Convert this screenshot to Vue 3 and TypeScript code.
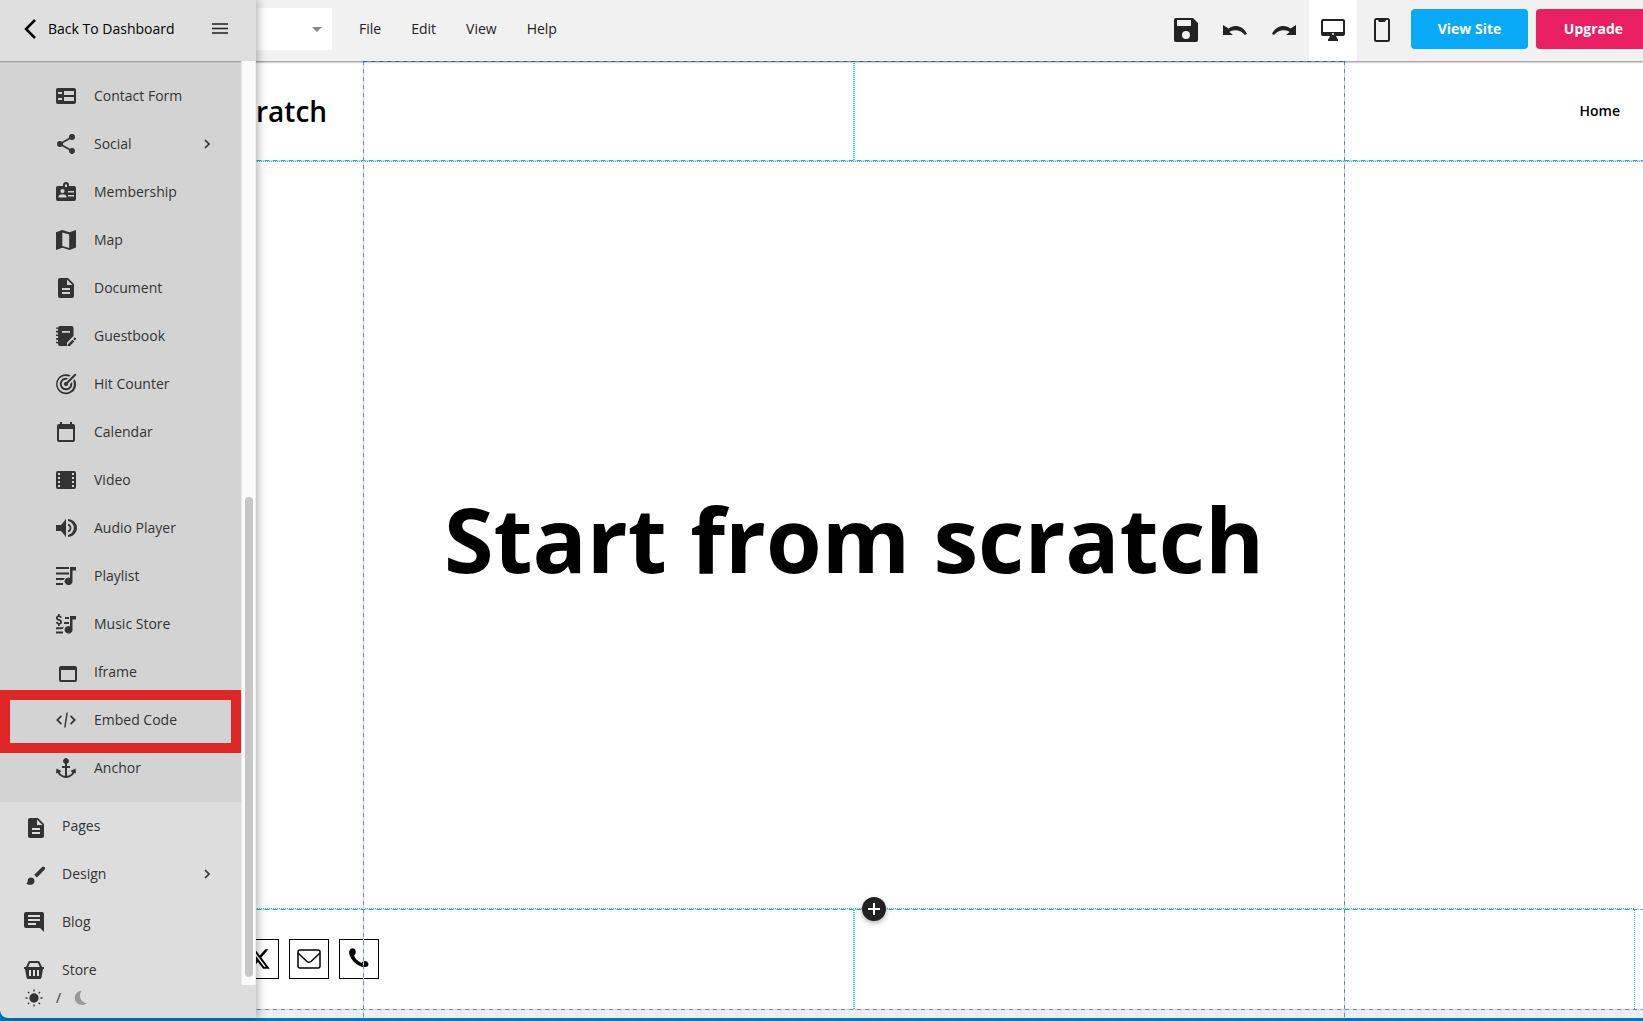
<script setup lang="ts">
interface MenuItem {
  label: string
  icon: string
  arrow?: boolean
  marked?: boolean
}

const icons: Record<string, string> = {
  form: 'M4 4h16a2 2 0 0 1 2 2v12a2 2 0 0 1-2 2H4a2 2 0 0 1-2-2V6a2 2 0 0 1 2-2ZM4 8v2h4V8ZM4 14v2h4v-2ZM10 7v4h10V7ZM10 13v4h10v-4Z',
  share: 'M18,16.08C17.24,16.08 16.56,16.38 16.04,16.85L8.91,12.7C8.96,12.47 9,12.24 9,12C9,11.76 8.96,11.53 8.91,11.3L15.96,7.19C16.5,7.69 17.21,8 18,8A3,3 0 0,0 21,5A3,3 0 0,0 18,2A3,3 0 0,0 15,5C15,5.24 15.04,5.47 15.09,5.7L8.04,9.81C7.5,9.31 6.79,9 6,9A3,3 0 0,0 3,12A3,3 0 0,0 6,15C6.79,15 7.5,14.69 8.04,14.19L15.16,18.34C15.11,18.55 15.08,18.77 15.08,19C15.08,20.61 16.39,21.91 18,21.91C19.61,21.91 20.92,20.61 20.92,19A2.92,2.92 0 0,0 18,16.08Z',
  badge: 'M4 6h5V5a3 3 0 0 1 6 0v1h5a2 2 0 0 1 2 2v11a2 2 0 0 1-2 2H4a2 2 0 0 1-2-2V8a2 2 0 0 1 2-2ZM11 4.500v2.500h2V4.500ZM8.500 9a2 2 0 1 0 0 4.200a2 2 0 0 0 0-4.200ZM4.500 17.500h8v-1c0-1.300-2.600-2.200-4-2.200s-4 .9-4 2.200ZM14 11v1.500h6V11ZM14 15v1.500h6V15Z',
  map: 'M2 4.200 8.300 2l7.200 2.300L22 2v17.500L15.700 22l-7.200-2.300L2 22ZM8.300 4.600v13.300l6.900 2V6.500Z',
  doc: 'M14 2H6c-1.100 0-2 .9-2 2v16c0 1.100.9 2 2 2h12c1.100 0 2-.9 2-2V8l-6-6zm2 16H8v-2h8v2zm0-4H8v-2h8v2zm-3-5V3.500L18.500 9H13z',
  book: 'M6 2h11.500a2 2 0 0 1 2 2v8L13 18.500V22H6a2 2 0 0 1-2-2v-.7H2v-1.600h2v-2H2V14h2v-2H2v-1.600h2v-2H2V6.700h2v-2H2V3.500h2.100A2 2 0 0 1 6 2ZM8 7v1.800h8V7ZM13.800 20.500l4.700-4.700 1.800 1.800-4.400 4.400h-2.100ZM19.200 14.900l1.600-1.600 1.500 1.500-1.500 1.600Z',
  target: 'M20.800 7.300l-1.600 1.600a8.200 8.200 0 1 1-4.100-4.100l1.500-1.500A10 10 0 1 0 20.800 7.300ZM18 10l-1.700 1.700A4.300 4.300 0 1 1 12.300 7.700L14 6A6.300 6.300 0 1 0 18 10ZM21 1.600l-8.500 8.500a2 2 0 1 0 1.400 1.400L22.400 3Z',
  calendar: 'M19 20H5V9H19M16 2V4H8V2H6V4H5C3.890 4 3 4.890 3 6V20A2 2 0 0 0 5 22H19A2 2 0 0 0 21 20V6C21 4.890 20.100 4 19 4H18V2',
  film: 'M4 3h16a2 2 0 0 1 2 2v14a2 2 0 0 1-2 2H4a2 2 0 0 1-2-2V5a2 2 0 0 1 2-2ZM4 5v2h2V5ZM4 9v2h2V9ZM4 13v2h2v-2ZM4 17v2h2v-2ZM18 5v2h2V5ZM18 9v2h2V9ZM18 13v2h2v-2ZM18 17v2h2v-2Z',
  audio: 'M2 9v6h5l5 6V3L7 9ZM14 3v2.100a7 7 0 0 1 0 13.800V21a9 9 0 0 0 0-18ZM14 7.500v2a2.700 2.700 0 0 1 0 5v2a4.700 4.700 0 0 0 0-9Z',
  playlist: 'M2 3h13v2H2ZM2 8.500h13v2H2ZM2 14h9l-1.500 2H2ZM2 19h7v2H2ZM16 3h6v3.500h-3.500V17.500a4 3.700 0 1 1-2.500-3.600Z',
  store: 'M11 5h4v2h-4ZM10 10h5v2h-5ZM2 19.500h7v2H2ZM2 15.500c2-.5 5 .5 8-1l-1 2c-2 1.200-5 .6-7 .8ZM16 4h6v3.500h-3.500V18a4 3.700 0 1 1-2.500-3.600ZM4 2h1.700v1.500c1.300.3 2 1 2.200 2.200H6C5.800 5.100 5.400 4.900 4.800 4.900 3.200 4.900 3.300 6.500 4.800 6.900 7 7.400 8 8.300 8 9.900c0 1.400-.9 2.200-2.300 2.500V14H4v-1.600C2.700 12 2 11.200 1.900 10h1.800c.5 1.500 2.700 1 2.500-.1C6 8.300 2 8.900 2 5.900 2 4.700 2.800 3.800 4 3.500Z',
  frame: 'M7 6h14a2 2 0 0 1 2 2v12a2 2 0 0 1-2 2H7a2 2 0 0 1-2-2V8a2 2 0 0 1 2-2ZM7 10v10h14V10Z',
  code: 'M6.900 7.300 8 8.500 4.600 12 8 15.500 6.900 16.700 2 12ZM17.100 7.300 16 8.500l3.400 3.500L16 15.500l1.100 1.200L22 12ZM12.500 4.500h1.400l-2.400 15h-1.400Z',
  anchor: 'M12 2a3 3 0 0 1 1 5.800V10h3v2h-3v7.800c2.500-.3 4.500-1.500 5.300-3.300L16.500 15l5-2.500.5 5-1.500-.7C19 20 16 21.500 12 22c-4-.5-7-2-8.500-5.200L2 17.500l.5-5 5 2.500-1.800 1.500c.8 1.800 2.800 3 5.300 3.300V12H8v-2h3V7.800A3 3 0 0 1 12 2Z',
  page: 'M16 4H8c-1.100 0-2 .9-2 2v16c0 1.100.9 2 2 2h12c1.100 0 2-.9 2-2V10l-6-6zm2 16h-8v-2h8v2zm0-4h-8v-2h8v2zm-3-5V5.500L20.500 11H15z',
  brush: 'M9 15.500c2 0 3.500 1.500 3.500 3.400 0 2.500-2 3.900-4.500 3.900-1.500 0-2.900-.6-3.800-1.600 1.100-.2 1.500-1 1.500-2.400 0-1.900 1.400-3.300 3.300-3.300ZM22.700 5.300a1.500 1.500 0 0 1 0 2.200l-7.800 8-2.700-2.700 8-7.800a1.500 1.500 0 0 1 2.100 0Z',
  blog: 'M4 2h16a2 2 0 0 1 2 2v18l-4-4H4a2 2 0 0 1-2-2V4a2 2 0 0 1 2-2ZM6 5v2h12V5ZM6 9v2h12V9ZM6 13v2h8v-2Z',
  basket: 'M8 3h8a2 2 0 0 1 1.800 1.200L20 9h2v2h-1l-1.500 8.400A2 2 0 0 1 17.500 21h-11a2 2 0 0 1-2-1.600L3 11H2V9h2l2.200-4.800A2 2 0 0 1 8 3ZM8 5 6.200 9h11.600L16 5ZM7 12v6h2v-6ZM11 12v6h2v-6ZM15 12v6h2v-6Z',
  save: 'M2 0h17l5 5v17a2 2 0 0 1-2 2H2a2 2 0 0 1-2-2V2a2 2 0 0 1 2-2ZM3 2v6h14V2ZM12 13a4 4 0 1 0 0 8a4 4 0 0 0 0-8Z',
  undo: 'M12.500 8c-2.650 0-5.050.99-6.900 2.600L0 7v10h10l-3.620-2.920c1.390-1.160 3.160-1.880 5.120-1.880 4.500 0 8.500 2 10.300 4.900L24 16C21.500 10.500 17 8 12.500 8z',
  desktop: 'M2 1h20a2 2 0 0 1 2 2v13a2 2 0 0 1-2 2h-7l1.500 3H17v2H7v-2h.5L9 18H2a2 2 0 0 1-2-2V3a2 2 0 0 1 2-2ZM2 3v11h20V3ZM12 15a1 1 0 1 0 0 2a1 1 0 0 0 0-2Z',
  phone: 'M6.500 0h11A2.500 2.500 0 0 1 20 2.500v19a2.500 2.500 0 0 1-2.500 2.500h-11A2.500 2.500 0 0 1 4 21.500v-19A2.500 2.500 0 0 1 6.500 0ZM6 2v20h12V2h-2l-1 2H9L8 2Z',
}

const widgets: MenuItem[] = [
  { label: 'Contact Form', icon: 'form' },
  { label: 'Social', icon: 'share', arrow: true },
  { label: 'Membership', icon: 'badge' },
  { label: 'Map', icon: 'map' },
  { label: 'Document', icon: 'doc' },
  { label: 'Guestbook', icon: 'book' },
  { label: 'Hit Counter', icon: 'target' },
  { label: 'Calendar', icon: 'calendar' },
  { label: 'Video', icon: 'film' },
  { label: 'Audio Player', icon: 'audio' },
  { label: 'Playlist', icon: 'playlist' },
  { label: 'Music Store', icon: 'store' },
  { label: 'Iframe', icon: 'frame' },
  { label: 'Embed Code', icon: 'code', marked: true },
  { label: 'Anchor', icon: 'anchor' },
]

const sections: MenuItem[] = [
  { label: 'Pages', icon: 'page' },
  { label: 'Design', icon: 'brush', arrow: true },
  { label: 'Blog', icon: 'blog' },
  { label: 'Store', icon: 'basket' },
]

const menus: string[] = ['File', 'Edit', 'View', 'Help']
</script>

<template>
  <div class="app">
    <header class="topbar">
      <select class="page-select" aria-label="Page"></select>
      <svg class="caret" viewBox="0 0 10 5"><path d="M0 0h10L5 5Z" /></svg>
      <nav class="menus">
        <button v-for="m in menus" :key="m" class="menu">{{ m }}</button>
      </nav>
      <div class="tools">
        <button class="tool" aria-label="Save"><svg viewBox="0 0 24 24"><path :d="icons.save" /></svg></button>
        <button class="tool" aria-label="Undo"><svg viewBox="0 0 24 24"><path :d="icons.undo" /></svg></button>
        <button class="tool flip" aria-label="Redo"><svg viewBox="0 0 24 24"><path :d="icons.undo" /></svg></button>
        <button class="tool active" aria-label="Desktop"><svg viewBox="0 0 24 24"><path :d="icons.desktop" /></svg></button>
        <button class="tool" aria-label="Mobile"><svg viewBox="0 0 24 24"><path :d="icons.phone" /></svg></button>
      </div>
      <button class="cta view">View Site</button>
      <button class="cta upgrade">Upgrade</button>
    </header>

    <main class="canvas">
      <section class="site-head">
        <div class="brand">ratch</div>
        <a class="home" href="#">Home</a>
        <i class="teal-mid"></i>
      </section>
      <div class="rule"><i class="dash"></i><i class="dots"></i></div>
      <section class="hero">
        <h1>Start from scratch</h1>
      </section>
      <div class="rule foot-rule">
        <i class="dots"></i><i class="dash"></i>
        <button class="add" aria-label="Add section">
          <svg viewBox="0 0 24 24"><path d="M11 6h2v5h5v2h-5v5h-2v-5H6v-2h5Z" /></svg>
        </button>
      </div>
      <section class="site-foot">
        <a class="social" href="#" aria-label="X">
          <svg viewBox="0 0 24 24"><path d="M18.240 2.250h3.310l-7.230 8.260 8.500 11.240H16.170l-5.210-6.820L4.990 21.750H1.680l7.730-8.840L1.250 2.250H8.080l4.710 6.230Zm-1.160 17.520h1.830L7.080 4.130H5.120Z" /></svg>
        </a>
        <a class="social" href="#" aria-label="Email">
          <svg viewBox="0 0 24 24" class="line"><rect x="1" y="3" width="22" height="18" rx="2" /><path d="M1 6l9 8.500q2 1.500 4 0L23 6" /></svg>
        </a>
        <a class="social" href="#" aria-label="Phone">
          <svg viewBox="0 0 24 24"><path d="M3.500 2C5 .5 8 1 8.500 3.500 9 6 8.500 7.500 7 8.500c1 3 4 6 7.500 7.500 1-1.800 2.500-2.300 4.500-1.800 2.500.6 3 3.300 1.800 4.800-1.300 1.500-4.500 1.300-7.300.2C8 17 4 12.500 2.400 7.500 1.900 5.500 2 3.500 3.500 2Z" /></svg>
        </a>
        <i class="teal-mid"></i>
        <i class="teal-end"></i>
      </section>
      <i class="dash"></i>
      <div class="outside"></div>
      <div class="column-guide"><i class="dash"></i></div>
    </main>

    <aside class="sidebar">
      <div class="side-head">
        <a class="back" href="#">
          <svg viewBox="0 0 12 20"><path d="M11 1 2 10l9 9" /></svg>
          <span>Back To Dashboard</span>
        </a>
        <button class="burger" aria-label="Toggle menu">
          <svg viewBox="0 0 16 12"><path d="M0 1h16M0 5.500h16M0 10h16" /></svg>
        </button>
      </div>
      <div class="side-body">
        <nav class="side-nav">
          <div class="widgets">
            <a v-for="w in widgets" :key="w.label" href="#" class="item sub" :class="{ marked: w.marked }">
              <svg class="ico" viewBox="0 0 24 24"><path :d="icons[w.icon]" /></svg>
              <span>{{ w.label }}</span>
              <svg v-if="w.arrow" class="arrow" viewBox="0 0 8 12"><path d="M2 2l4 4-4 4" /></svg>
            </a>
          </div>
          <a v-for="s in sections" :key="s.label" href="#" class="item">
            <svg class="ico" viewBox="0 0 24 24"><path :d="icons[s.icon]" /></svg>
            <span>{{ s.label }}</span>
            <svg v-if="s.arrow" class="arrow" viewBox="0 0 8 12"><path d="M2 2l4 4-4 4" /></svg>
          </a>
        </nav>
        <div class="track"><div class="thumb"></div></div>
      </div>
      <div class="side-foot">
        <svg class="sun" viewBox="0 0 18 18"><circle cx="9" cy="9" r="4" /><path d="M9 .5v2M9 15.500v2M.5 9h2M15.500 9h2M3 3l1.300 1.300M13.700 13.700 15 15M3 15l1.300-1.300M13.700 4.300 15 3" /></svg>
        <span>/</span>
        <svg class="moon" viewBox="0 0 14 16"><path d="M8 .5C5 3 4.500 11 12.800 13.500 8 17 .8 14 .8 7.800.8 3.500 4 .8 8 .5Z" /></svg>
      </div>
    </aside>
    <div class="strip"></div>
  </div>
</template>

<style>
body {
  margin: 0;
  overflow: hidden;
}
</style>

<style scoped>
* {
  box-sizing: border-box;
}
.app {
  position: relative;
  display: flex;
  flex-direction: column;
  height: 100vh;
  overflow: hidden;
  background: #0079b0;
  font-family: "Open Sans", "Noto Sans", sans-serif;
  font-size: 14px;
  line-height: 20px;
  color: #222;
}
button {
  font: inherit;
  color: inherit;
  border: 0;
  padding: 0;
  background: none;
}
a {
  color: inherit;
  text-decoration: none;
}
svg {
  display: block;
  flex: none;
  fill: currentColor;
  fill-rule: evenodd;
}
.topbar {
  position: relative;
  z-index: 2;
  flex: none;
  display: flex;
  align-items: center;
  height: 61px;
  padding: 0 0 3px 65px;
  background: #f1f1f1;
  box-shadow: 0 1px 2px rgba(0, 0, 0, 0.5);
}
.page-select {
  appearance: none;
  width: 267px;
  height: 42px;
  border: 0;
  border-radius: 0;
  background: #fff;
}
.caret {
  width: 10px;
  height: 5px;
  margin-left: -20px;
  color: #888;
}
.menus {
  display: flex;
  gap: 30px;
  margin-left: 37px;
}
.tools {
  display: flex;
  gap: 1px;
  align-self: stretch;
  margin: 0 5px -3px auto;
}
.tool {
  display: flex;
  align-items: center;
  justify-content: center;
  width: 48px;
  padding-bottom: 1px;
}
.tool svg {
  width: 24px;
  height: 24px;
}
.flip svg {
  transform: scaleX(-1);
}
.tool.active {
  background: #fff;
}
.cta {
  height: 40px;
  border-radius: 4px;
  color: #fff;
  font-weight: 700;
}
.view {
  width: 117px;
  background: #08a9f7;
}
.upgrade {
  width: 107px;
  margin-left: 8px;
  padding-left: 8px;
  border-radius: 4px 0 0 4px;
  background: #ea1e63;
}
.canvas {
  position: relative;
  flex: 1;
  display: flex;
  flex-direction: column;
  margin-left: 65px;
  background: #fff;
}
.dash,
.dots {
  display: block;
  height: 1px;
}
.dash {
  background: repeating-linear-gradient(90deg, #4d8df6 0 4px, #d6d0cc 4px 8px);
}
.dots {
  background: repeating-linear-gradient(90deg, #1fd6cb 0 1px, #d9f8f5 1px 2px);
}
.site-head {
  position: relative;
  display: flex;
  align-items: center;
  justify-content: space-between;
  height: 99px;
  padding: 0 23px 0 191px;
  color: #000;
  font-weight: 600;
}
.brand {
  font-size: 28px;
  line-height: 40px;
}
.teal-mid {
  position: absolute;
  top: 0;
  bottom: 0;
  left: calc(50% - 1px);
  width: 2px;
  background: repeating-linear-gradient(#1fd6cb 0 1px, #fff 1px 2px);
}
.teal-end {
  position: absolute;
  top: 0;
  bottom: 0;
  right: 8px;
  width: 1px;
  background: repeating-linear-gradient(#1fd6cb 0 1px, #fff 1px 2px);
}
.rule {
  position: relative;
}
.foot-rule .dots {
  margin-right: 8px;
}
.hero {
  flex: 1;
  display: flex;
  align-items: center;
  justify-content: center;
  padding-top: 6px;
}
h1 {
  margin: 0;
  color: #000;
  font-size: 90px;
  line-height: 120px;
  font-weight: 700;
  white-space: nowrap;
}
.add {
  position: absolute;
  top: -11px;
  left: calc(50% + 8px);
  width: 24px;
  height: 24px;
  border-radius: 50%;
  background: #222;
  color: #fff;
  box-shadow: 0 2px 5px rgba(0, 0, 0, 0.3);
}
.site-foot {
  position: relative;
  display: flex;
  align-items: center;
  gap: 10px;
  height: 99px;
  padding: 0 0 2px 174px;
  color: #000;
}
.social {
  display: flex;
  align-items: center;
  justify-content: center;
  width: 40px;
  height: 40px;
  border: 1px solid #000;
}
.social svg {
  width: 24px;
  height: 24px;
}
.social .line {
  fill: none;
  stroke: currentColor;
  stroke-width: 1.5;
}
.outside {
  height: 8px;
  background: repeating-linear-gradient(90deg, #f0f0f0 0 10px, #ededee 10px 20px);
}
.column-guide {
  position: absolute;
  top: 0;
  bottom: 0;
  left: 50%;
  width: 982px;
  transform: translateX(-50%);
  pointer-events: none;
}
.column-guide::before,
.column-guide::after {
  content: "";
  position: absolute;
  top: 0;
  bottom: 0;
  left: 0;
  width: 1px;
  background: repeating-linear-gradient(#4d8df6 0 4px, #d6d0cc 4px 8px);
}
.column-guide::after {
  left: auto;
  right: 0;
}
.sidebar {
  position: absolute;
  z-index: 3;
  top: 0;
  bottom: 3px;
  left: 0;
  width: 256px;
  display: flex;
  flex-direction: column;
  background: #ddd;
  border-radius: 2px 0 0 8px;
  box-shadow: 2px 0 10px rgba(0, 0, 0, 0.3);
  color: #333;
}
.side-head {
  flex: none;
  display: flex;
  align-items: center;
  justify-content: space-between;
  height: 61px;
  padding: 0 28px 3px 24px;
  border-radius: 2px 0 0 0;
  background: #dfdfdf;
  color: #000;
}
.back {
  display: flex;
  align-items: center;
  gap: 12px;
}
.back svg {
  width: 12px;
  height: 20px;
  fill: none;
  stroke: currentColor;
  stroke-width: 2.5;
}
.burger svg {
  width: 16px;
  height: 12px;
  stroke: #222;
  stroke-width: 1.5;
}
.side-body {
  flex: 1;
  min-height: 0;
  display: flex;
}
.side-nav {
  flex: 1;
  overflow: hidden;
}
.widgets {
  padding: 11px 0 10px;
  background: linear-gradient(#a0a0a0 0 1px, #c4c4c4 1px 2px, #d3d3d3 2px);
}
.item {
  position: relative;
  display: flex;
  align-items: center;
  gap: 16px;
  height: 48px;
  padding: 0 30px 0 22px;
}
.item.sub {
  padding-left: 54px;
}
.marked::before {
  content: "";
  position: absolute;
  z-index: 1;
  inset: -6px 0 -9px;
  border: 10px solid #de2626;
}
.ico {
  width: 24px;
  height: 24px;
}
.arrow {
  width: 8px;
  height: 12px;
  margin-left: auto;
  fill: none;
  stroke: currentColor;
  stroke-width: 1.7;
}
.track {
  display: flex;
  align-items: flex-end;
  justify-content: center;
  width: 15px;
  padding-bottom: 8px;
  background: #fafafa;
  border-left: 1px solid #e8e8e8;
  border-right: 1px solid #ededed;
}
.thumb {
  width: 8px;
  height: 480px;
  border-radius: 4px;
  background: #c5c5c5;
}
.side-foot {
  flex: none;
  display: flex;
  align-items: center;
  gap: 13px;
  height: 33px;
  padding: 0 25px 7px;
}
.sun {
  width: 18px;
  height: 18px;
  stroke: currentColor;
  stroke-width: 1.3;
}
.moon {
  width: 14px;
  height: 16px;
  color: #999;
}
.strip {
  flex: none;
  height: 3px;
}
</style>
